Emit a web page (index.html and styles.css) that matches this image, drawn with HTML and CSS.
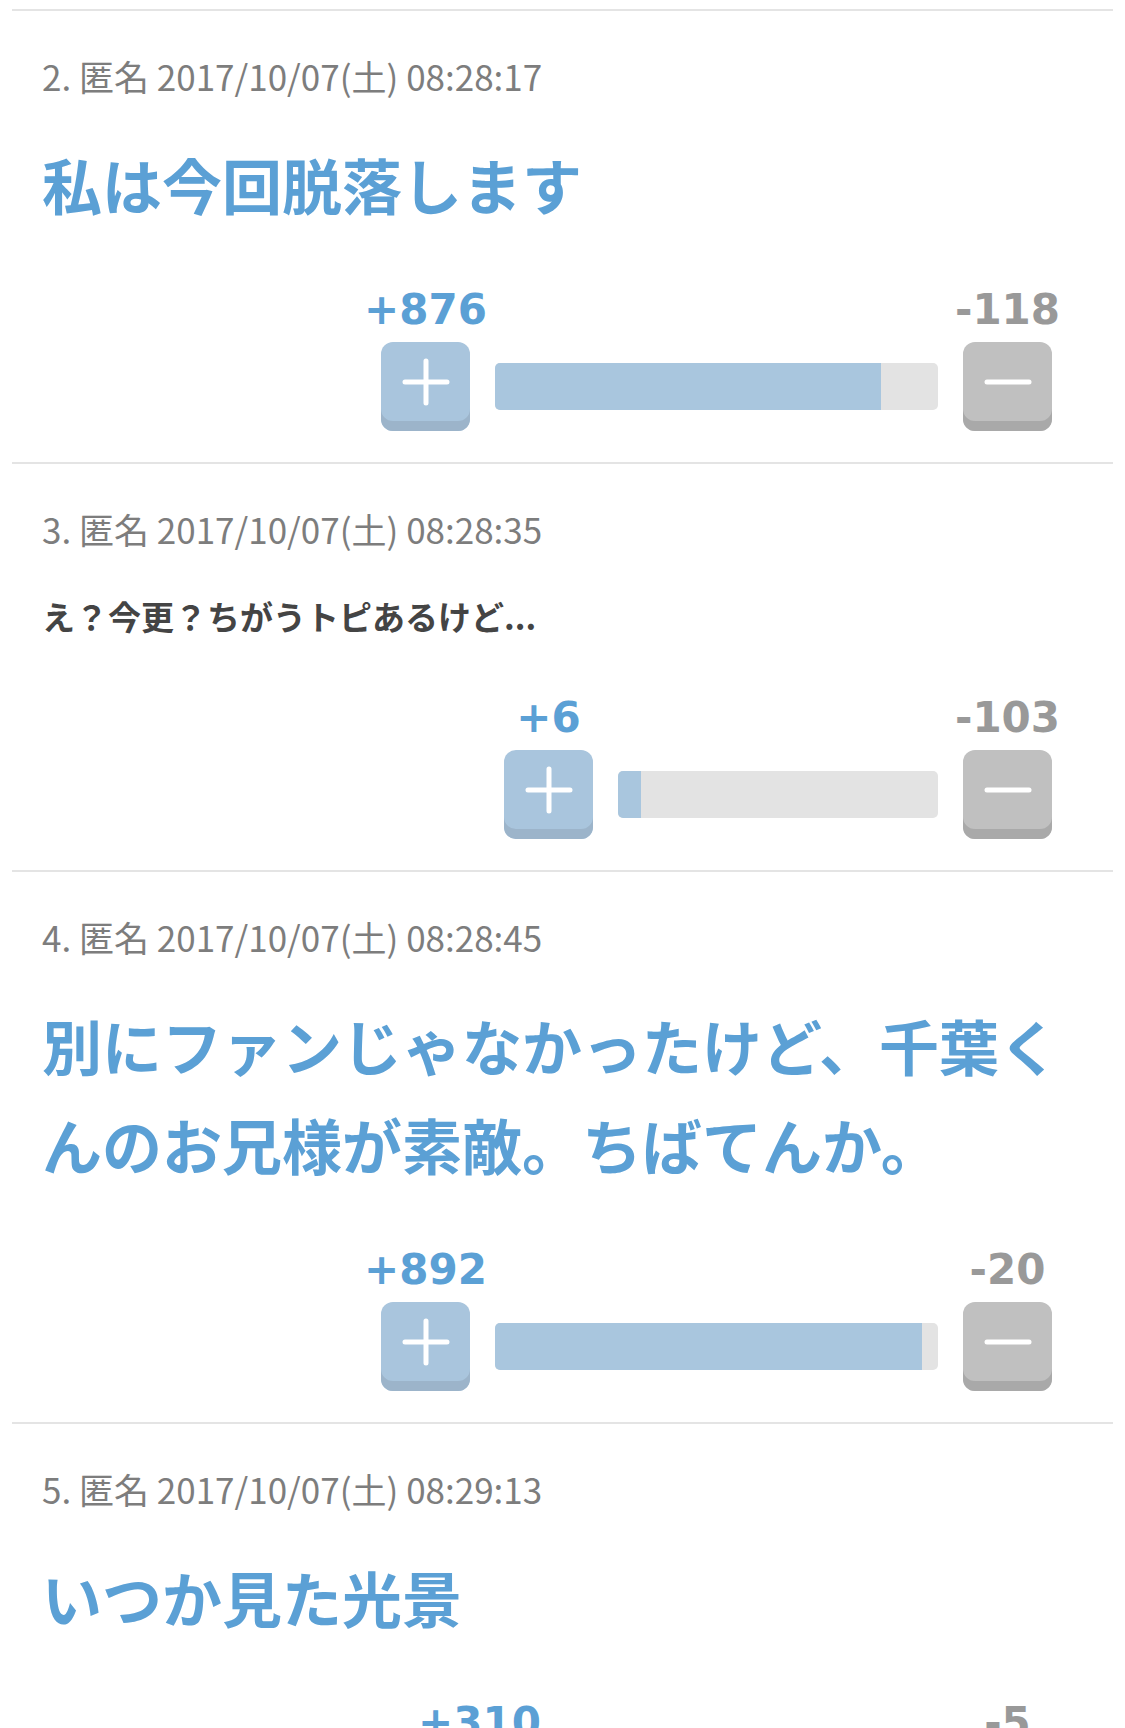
FILE: index.html
```html
<!DOCTYPE html>
<html lang="ja">
<head>
<meta charset="utf-8">
<title>コメント</title>
<link rel="stylesheet" href="styles.css">
</head>
<body>
<main class="comments">

  <article class="comment">
    <div class="meta">2. 匿名 2017/10/07(土) 08:28:17</div>
    <p class="text text--big">私は今回脱落します</p>
    <div class="vote">
      <div class="vote__side">
        <span class="vote__count vote__count--plus">+876</span>
        <button class="vote__btn vote__btn--plus" type="button" aria-label="プラス">
          <svg viewBox="0 0 48 48" width="48" height="48"><path d="M24 3V45M3 24H45"/></svg>
        </button>
      </div>
      <div class="vote__bar" style="width:443px"><div class="vote__fill" style="width:87.1%"></div></div>
      <div class="vote__side">
        <span class="vote__count vote__count--minus">-118</span>
        <button class="vote__btn vote__btn--minus" type="button" aria-label="マイナス">
          <svg viewBox="0 0 48 48" width="48" height="48"><path d="M3 24H45"/></svg>
        </button>
      </div>
    </div>
  </article>

  <article class="comment">
    <div class="meta">3. 匿名 2017/10/07(土) 08:28:35</div>
    <p class="text text--small">え？今更？ちがうトピあるけど...</p>
    <div class="vote">
      <div class="vote__side">
        <span class="vote__count vote__count--plus">+6</span>
        <button class="vote__btn vote__btn--plus" type="button" aria-label="プラス">
          <svg viewBox="0 0 48 48" width="48" height="48"><path d="M24 3V45M3 24H45"/></svg>
        </button>
      </div>
      <div class="vote__bar" style="width:320px"><div class="vote__fill" style="width:7.2%"></div></div>
      <div class="vote__side">
        <span class="vote__count vote__count--minus">-103</span>
        <button class="vote__btn vote__btn--minus" type="button" aria-label="マイナス">
          <svg viewBox="0 0 48 48" width="48" height="48"><path d="M3 24H45"/></svg>
        </button>
      </div>
    </div>
  </article>

  <article class="comment">
    <div class="meta">4. 匿名 2017/10/07(土) 08:28:45</div>
    <p class="text text--big">別にファンじゃなかったけど、千葉くんのお兄様が素敵。ちばてんか。</p>
    <div class="vote">
      <div class="vote__side">
        <span class="vote__count vote__count--plus">+892</span>
        <button class="vote__btn vote__btn--plus" type="button" aria-label="プラス">
          <svg viewBox="0 0 48 48" width="48" height="48"><path d="M24 3V45M3 24H45"/></svg>
        </button>
      </div>
      <div class="vote__bar" style="width:443px"><div class="vote__fill" style="width:96.4%"></div></div>
      <div class="vote__side">
        <span class="vote__count vote__count--minus">-20</span>
        <button class="vote__btn vote__btn--minus" type="button" aria-label="マイナス">
          <svg viewBox="0 0 48 48" width="48" height="48"><path d="M3 24H45"/></svg>
        </button>
      </div>
    </div>
  </article>

  <article class="comment">
    <div class="meta">5. 匿名 2017/10/07(土) 08:29:13</div>
    <p class="text text--big">いつか見た光景</p>
    <div class="vote">
      <div class="vote__side">
        <span class="vote__count vote__count--plus">+310</span>
        <button class="vote__btn vote__btn--plus" type="button" aria-label="プラス">
          <svg viewBox="0 0 48 48" width="48" height="48"><path d="M24 3V45M3 24H45"/></svg>
        </button>
      </div>
      <div class="vote__bar" style="width:389px"><div class="vote__fill" style="width:98%"></div></div>
      <div class="vote__side">
        <span class="vote__count vote__count--minus">-5</span>
        <button class="vote__btn vote__btn--minus" type="button" aria-label="マイナス">
          <svg viewBox="0 0 48 48" width="48" height="48"><path d="M3 24H45"/></svg>
        </button>
      </div>
    </div>
  </article>

</main>
</body>
</html>
```

FILE: styles.css
```css
html, body {
  margin: 0;
  padding: 0;
  background: #ffffff;
}

body {
  font-family: "Noto Sans CJK JP", "Noto Sans", sans-serif;
  color: #444444;
}

.comments {
  padding-top: 9px;
}

/* one comment block, separated by a light rule */
.comment {
  margin: 0 12px;
  padding: 43px 30px 31px 30px;
  border-top: 2px solid #e4e4e4;
}

.meta {
  font-size: 35px;
  line-height: 44px;
  color: #7d7d7d;
  font-weight: 400;
}

.text {
  margin: 0;
  font-weight: 700;
}

.text--big {
  margin-top: 36px;
  padding-bottom: 3px;
  font-size: 60px;
  line-height: 99px;
  color: #5ba0d5;
}

.text--small {
  margin-top: 40px;
  padding-bottom: 3px;
  font-size: 33px;
  line-height: 50px;
  color: #444444;
}

/* plus / minus voting row */
.vote {
  margin-top: 50px;
  margin-right: 31px;
  display: flex;
  justify-content: flex-end;
  align-items: flex-end;
}

.vote__side {
  width: 89px;
  display: flex;
  flex-direction: column;
  align-items: center;
  gap: 8px;
}

.vote__count {
  font-family: "DejaVu Sans", "Liberation Sans", sans-serif;
  font-weight: 700;
  font-size: 42px;
  line-height: 48px;
  white-space: nowrap;
}

.vote__count--plus { color: #5ba0d5; }
.vote__count--minus { color: #999999; }

.vote__btn {
  width: 89px;
  height: 89px;
  padding: 0 0 10px 0;
  border: 0;
  border-radius: 12px;
  display: flex;
  align-items: center;
  justify-content: center;
  cursor: pointer;
}

.vote__btn svg {
  display: block;
  fill: none;
  stroke: #ffffff;
  stroke-width: 5;
  stroke-linecap: round;
}

.vote__btn--plus {
  background: #a9c5dd;
  box-shadow: inset 0 -10px 0 #9cb4ca;
}

.vote__btn--minus {
  background: #c0c0c0;
  box-shadow: inset 0 -10px 0 #a9a9a9;
}

.vote__bar {
  height: 47px;
  margin: 0 25px 21px 25px;
  background: #e3e3e3;
  border-radius: 5px;
  overflow: hidden;
  flex: none;
}

.vote__fill {
  height: 100%;
  background: #a9c6de;
}
```
